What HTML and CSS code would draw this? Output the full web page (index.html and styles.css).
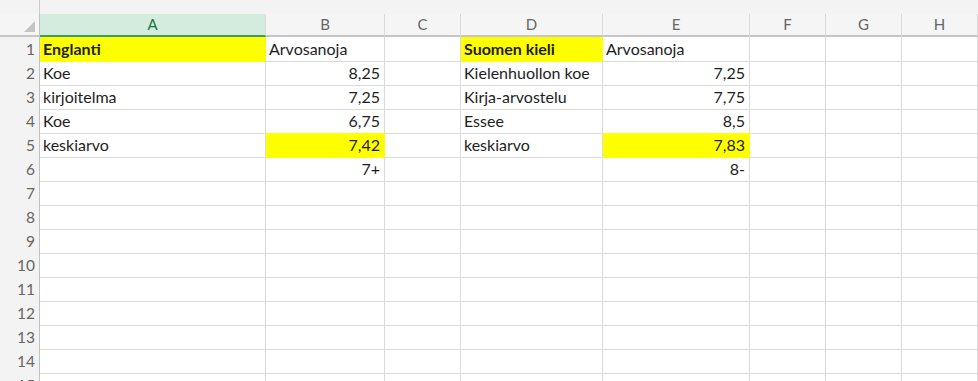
FILE: index.html
```html
<!DOCTYPE html>
<html lang="fi">
<head>
  <meta charset="UTF-8" />
  <meta name="viewport" content="width=device-width, initial-scale=1.0"/>
  <title>Arvosanat</title>
  <link rel="stylesheet" href="styles.css">
</head>
<body>

  <div class="sheet">
    <!-- top strip above the column letters -->
    <div class="strip"><div class="strip-corner"></div></div>

    <!-- column letters -->
    <div class="row head">
      <div class="corner"><span class="tri"></span></div>
      <div class="col active">A</div>
      <div class="col">B</div>
      <div class="col">C</div>
      <div class="col">D</div>
      <div class="col">E</div>
      <div class="col">F</div>
      <div class="col">G</div>
      <div class="col">H</div>
    </div>

    <div class="row">
      <div class="num">1</div>
      <div class="cell fill bold">Englanti</div>
      <div class="cell">Arvosanoja</div>
      <div class="cell"></div>
      <div class="cell fill bold">Suomen kieli</div>
      <div class="cell">Arvosanoja</div>
      <div class="cell"></div>
      <div class="cell"></div>
      <div class="cell"></div>
    </div>

    <div class="row">
      <div class="num">2</div>
      <div class="cell">Koe</div>
      <div class="cell right">8,25</div>
      <div class="cell"></div>
      <div class="cell">Kielenhuollon koe</div>
      <div class="cell right">7,25</div>
      <div class="cell"></div>
      <div class="cell"></div>
      <div class="cell"></div>
    </div>

    <div class="row">
      <div class="num">3</div>
      <div class="cell">kirjoitelma</div>
      <div class="cell right">7,25</div>
      <div class="cell"></div>
      <div class="cell">Kirja-arvostelu</div>
      <div class="cell right">7,75</div>
      <div class="cell"></div>
      <div class="cell"></div>
      <div class="cell"></div>
    </div>

    <div class="row">
      <div class="num">4</div>
      <div class="cell">Koe</div>
      <div class="cell right">6,75</div>
      <div class="cell"></div>
      <div class="cell">Essee</div>
      <div class="cell right">8,5</div>
      <div class="cell"></div>
      <div class="cell"></div>
      <div class="cell"></div>
    </div>

    <div class="row">
      <div class="num">5</div>
      <div class="cell">keskiarvo</div>
      <div class="cell right fill">7,42</div>
      <div class="cell"></div>
      <div class="cell">keskiarvo</div>
      <div class="cell right fill">7,83</div>
      <div class="cell"></div>
      <div class="cell"></div>
      <div class="cell"></div>
    </div>

    <div class="row">
      <div class="num">6</div>
      <div class="cell"></div>
      <div class="cell right">7+</div>
      <div class="cell"></div>
      <div class="cell"></div>
      <div class="cell right">8-</div>
      <div class="cell"></div>
      <div class="cell"></div>
      <div class="cell"></div>
    </div>

    <div class="row"><div class="num">7</div><div class="cell"></div><div class="cell"></div><div class="cell"></div><div class="cell"></div><div class="cell"></div><div class="cell"></div><div class="cell"></div><div class="cell"></div></div>
    <div class="row"><div class="num">8</div><div class="cell"></div><div class="cell"></div><div class="cell"></div><div class="cell"></div><div class="cell"></div><div class="cell"></div><div class="cell"></div><div class="cell"></div></div>
    <div class="row"><div class="num">9</div><div class="cell"></div><div class="cell"></div><div class="cell"></div><div class="cell"></div><div class="cell"></div><div class="cell"></div><div class="cell"></div><div class="cell"></div></div>
    <div class="row"><div class="num">10</div><div class="cell"></div><div class="cell"></div><div class="cell"></div><div class="cell"></div><div class="cell"></div><div class="cell"></div><div class="cell"></div><div class="cell"></div></div>
    <div class="row"><div class="num">11</div><div class="cell"></div><div class="cell"></div><div class="cell"></div><div class="cell"></div><div class="cell"></div><div class="cell"></div><div class="cell"></div><div class="cell"></div></div>
    <div class="row"><div class="num">12</div><div class="cell"></div><div class="cell"></div><div class="cell"></div><div class="cell"></div><div class="cell"></div><div class="cell"></div><div class="cell"></div><div class="cell"></div></div>
    <div class="row"><div class="num">13</div><div class="cell"></div><div class="cell"></div><div class="cell"></div><div class="cell"></div><div class="cell"></div><div class="cell"></div><div class="cell"></div><div class="cell"></div></div>
    <div class="row"><div class="num">14</div><div class="cell"></div><div class="cell"></div><div class="cell"></div><div class="cell"></div><div class="cell"></div><div class="cell"></div><div class="cell"></div><div class="cell"></div></div>
    <div class="row"><div class="num">15</div><div class="cell"></div><div class="cell"></div><div class="cell"></div><div class="cell"></div><div class="cell"></div><div class="cell"></div><div class="cell"></div><div class="cell"></div></div>
  </div>

</body>
</html>
```

FILE: styles.css
```css
body {
  margin: 0;
  background: #fff;
  font-family: 'Lato', 'Liberation Sans', sans-serif;
  color: #1e1e1e;
  overflow: hidden;
}

.sheet {
  width: 978px;
  height: 381px;
  overflow: hidden;
}

.strip {
  height: 14px;
  background: #f3f3f3;
}

.strip-corner {
  width: 40px;
  height: 100%;
  box-sizing: border-box;
  border-right: 1px solid #c9c9c9;
}

.row {
  display: grid;
  grid-template-columns: 40px 226px 119px 76px 142px 147px 76px 76px 76px;
  height: 24px;
}

.row > div {
  box-sizing: border-box;
  border-right: 1px solid #dadada;
  border-bottom: 1px solid #dadada;
}

/* column letters */
.head {
  height: 23px;
}

.head > div {
  background: #f5f5f5;
  border-bottom: 2px solid #c6c6c6;
}

.corner {
  display: flex;
  justify-content: flex-end;
  align-items: flex-end;
  padding: 0 4px 3px 0;
}

.row > .corner {
  border-right-color: #c2c2c2;
}

.tri {
  width: 0;
  height: 0;
  border-left: 11px solid transparent;
  border-bottom: 11px solid #c4c4c4;
}

.col {
  text-align: center;
  font-size: 15px;
  line-height: 21px;
  color: #666;
}

.head > .active {
  background: #d3ecdd;
  border-bottom-color: #3f9a63;
  color: #217346;
}

/* row numbers */
.num {
  background: #f3f3f3;
  color: #666;
  text-align: right;
  padding-right: 4px;
  font-size: 15.5px;
  line-height: 24px;
}

.row > .num {
  border-right-color: #c2c2c2;
}

.cell {
  font-size: 16px;
  line-height: 24px;
  padding: 0 3px;
  white-space: nowrap;
  overflow: hidden;
}

.right { text-align: right; padding-right: 4px; }
.bold { font-weight: bold; }

.row > .fill {
  background: #ffff00;
  border-color: #ffff00;
}
```
